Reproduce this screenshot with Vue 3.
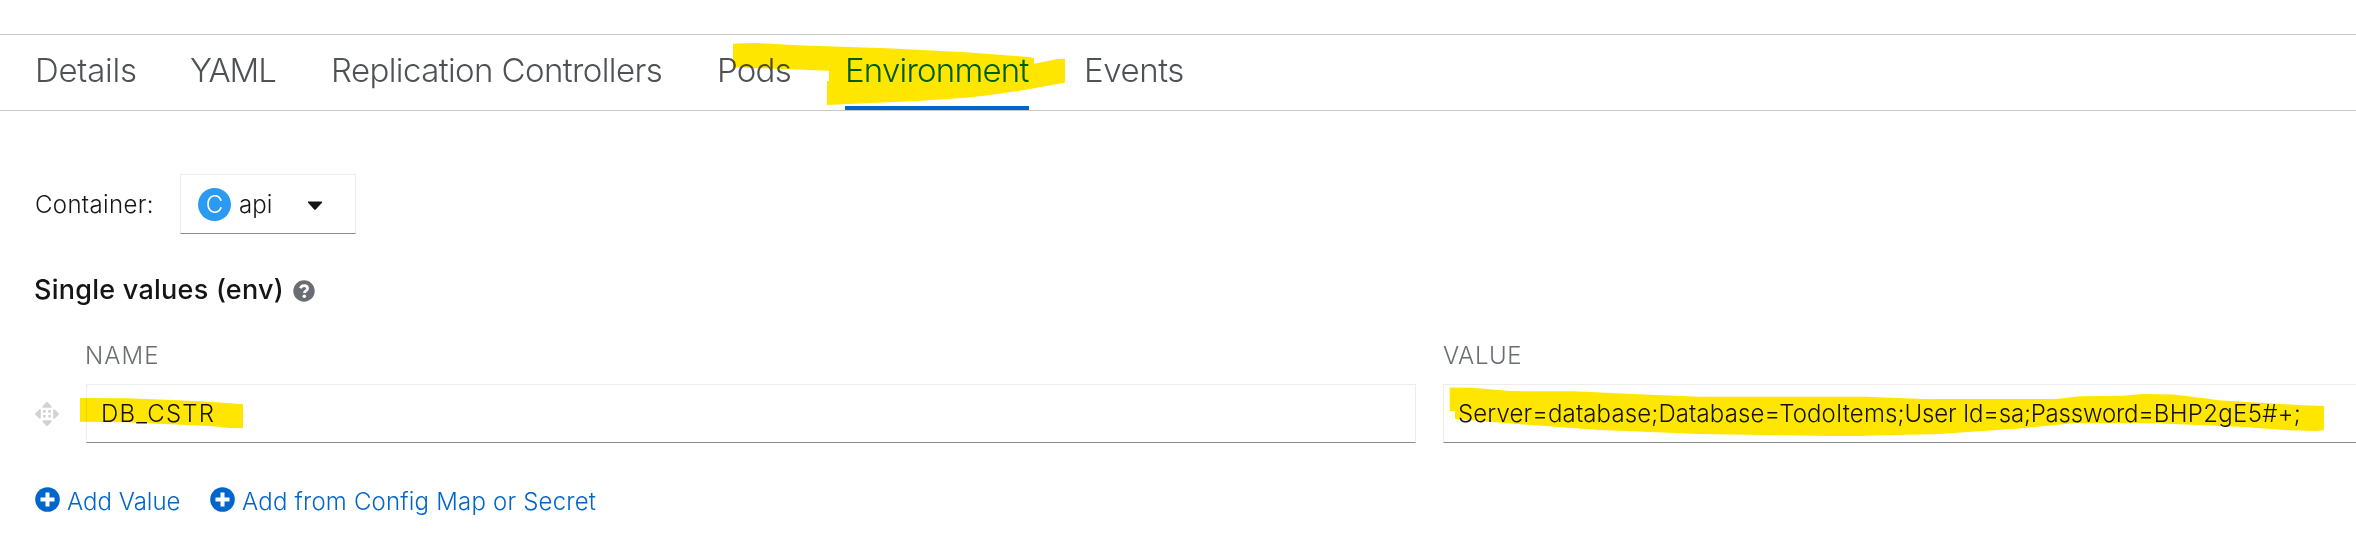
<script setup>
const tabs = [
  { label: 'Details', width: 100, tracking: -0.25 },
  { label: 'YAML', width: 86, tracking: -1.1 },
  { label: 'Replication Controllers', width: 331, tracking: -0.59 },
  { label: 'Pods', width: 73, tracking: -0.75 },
  { label: 'Environment', width: 184, tracking: -0.78, active: true },
  { label: 'Events', width: 100, tracking: -0.42 },
]
const actions = [
  { label: 'Add Value', cls: 'add-value' },
  { label: 'Add from Config Map or Secret', cls: 'add-from' },
]
</script>

<template>
  <main class="page">
    <nav class="tabs">
      <a
        v-for="t in tabs"
        :key="t.label"
        class="tab"
        :class="{ active: t.active }"
        :style="{ width: t.width + 'px', letterSpacing: t.tracking + 'px' }"
      >{{ t.label }}</a>
    </nav>

    <section class="container-row">
      <span class="container-label">Container:</span>
      <div class="select">
        <span class="badge">C</span>
        <span class="select-text">api</span>
        <svg class="caret" width="16" height="10" viewBox="0 0 16 10"><path d="M1.4 .5h13.2q1 .3.3 1.3L8.8 8.4q-.8.8-1.6 0L1.1 1.8Q.4.8 1.4.5z" fill="#151515" /></svg>
      </div>
    </section>

    <h2 class="heading">
      <span>Single values (env)</span>
      <svg class="help" width="22" height="22" viewBox="0 0 22 22">
        <circle cx="11" cy="11" r="10.7" fill="#6a6e73" />
        <path d="M7.4 8.2C8.1 6.5 9.3 5.7 11.1 5.7c2 0 3.5 1.1 3.5 2.9 0 2.4-3.2 2.3-3.2 4.4" fill="none" stroke="#fff" stroke-width="2.7" />
        <circle cx="11.3" cy="16.3" r="1.8" fill="#fff" />
      </svg>
    </h2>

    <section class="grid">
      <span></span>
      <span class="col name-col">NAME</span>
      <span class="col value-col">VALUE</span>
      <svg class="grip" width="24" height="24" viewBox="0 0 24 24" fill="#d2d2d2">
        <path d="M12 0q.6 0 1 .6l3.500 3.700q.7 1.500-.7 1.500H8.200q-1.400 0-.7-1.500L11 .6q.4-.6 1-.6zM12 24q.6 0 1-.6l3.500-3.700q.7-1.500-.7-1.500H8.200q-1.400 0-.7 1.500l3.500 3.700q.4.6 1 .6zM0 12q0-.6.6-1l3.700-3.500q1.500-.7 1.500.7v7.600q0 1.400-1.500.7L.6 13q-.6-.4-.6-1zM24 12q0-.6-.6-1l-3.700-3.500q-1.500-.7-1.500.7v7.600q0 1.400 1.500.7l3.700-3.500q.6-.4.6-1z" />
        <path d="M8.100 8.100h2.600v2.600H8.100zM13.300 8.100h2.600v2.600h-2.600zM8.100 13h2.600v2.600H8.100zM13.300 13h2.600v2.600h-2.600z" />
      </svg>
      <div class="field"><span class="name-text">DB_CSTR</span></div>
      <div class="field value"><span class="value-text">Server=database;Database=TodoItems;</span><span class="value-user">User Id=sa;Password=</span><span class="value-end">BHP2gE5#+;</span></div>
    </section>

    <section class="actions">
      <a v-for="a in actions" :key="a.label" class="action">
        <svg class="plus" width="25" height="25" viewBox="0 0 25 25">
          <circle cx="12.500" cy="12.500" r="12.300" fill="#06c" />
          <path d="M12.500 5.500v14M5.500 12.500h14" stroke="#fff" stroke-width="4" />
        </svg>
        <span :class="a.cls">{{ a.label }}</span>
      </a>
    </section>

    <!-- Marker strokes over the active tab and the variable's fields -->
    <svg class="marker" width="2356" height="560" viewBox="0 0 2356 560" fill="#ffe600">
      <path d="M733 43.700Q744 43 756 43L797 45.300L887 48.300L966 52.300L1028 57Q1034 57.500 1034 58.500V63.700Q1047 61.500 1057 59L1065 58.700V82.700L1024 90Q995 95 966 97.700L921 100.700L827 105V81H829V70.700L733 67.300z" />
      <path d="M80 398L127 398.300L173 400L213 402L243 404.300V428H230L213 426.300L127 422.300L80 421.700z" />
      <path d="M1449.700 387.500L1472 387.700L1498 390Q1513 391.300 1530 391.300H1573L1633 394L1700 396.700H1867L1923 399H2056L2073 397L2083 396.300L2123 395.700L2143 394L2173 394.500Q2188 396 2219 400.300L2303 405.300L2324 406V430L2316 431L2289 430.300L2243 427L2156 423.300H2073L2016 428.700L1939 434L1856 436H1833L1700 434L1600 430L1517 424L1455 419V411H1449.700z" />
    </svg>
  </main>
</template>

<style>
body { margin: 0; background: #fff; }
</style>

<style scoped>
.page {
  position: relative;
  width: 2356px;
  height: 560px;
  box-sizing: border-box;
  padding-top: 34px;
  overflow: hidden;
  background: #fff;
  color: #151515;
  font-family: Inter, "Liberation Sans", sans-serif;
  font-size: 24px;
  font-weight: 300;
}
.tabs {
  display: flex;
  gap: 55px;
  height: 75px;
  padding-left: 35px;
  border-top: 1px solid #c7c7c7;
  border-bottom: 1px solid #c7c7c7;
}
.tab {
  box-sizing: border-box;
  height: 75px;
  line-height: 70px;
  font-size: 33px;
  color: #4f5255;
  white-space: nowrap;
}
.tab.active {
  color: #06c;
  border-bottom: 4px solid #06c;
}
.container-row {
  display: flex;
  align-items: center;
  height: 60px;
  margin-top: 63px;
  padding-left: 35px;
}
.container-label { width: 145px; letter-spacing: .35px; }
.select {
  display: flex;
  align-items: center;
  box-sizing: border-box;
  width: 176px;
  height: 60px;
  padding-left: 17px;
  border: 1px solid #ededed;
  border-bottom-color: #8a8d90;
}
.badge {
  width: 33px;
  height: 33px;
  border-radius: 50%;
  background: #2b9af3;
  color: #fff;
  line-height: 33px;
  text-align: center;
}
.select-text { width: 68px; margin-left: 8px; }
.caret { display: block; margin-top: 3px; }
.heading {
  display: flex;
  align-items: center;
  gap: 9px;
  height: 40px;
  margin: 35px 0 0;
  padding-left: 34px;
  font-size: 27px;
  font-weight: 500;
}
.heading span { width: 250px; letter-spacing: .25px; white-space: nowrap; }
.help { margin-top: 3px; }
.grid {
  display: grid;
  grid-template-columns: 24px 1330px 920px;
  column-gap: 27px;
  grid-template-rows: 40px 59px;
  row-gap: 8px;
  align-items: center;
  margin-top: 27px;
  padding-left: 35px;
}
.col { color: #6a6e73; line-height: 40px; }
.name-col { letter-spacing: 1.100px; margin-left: -1px; }
.value-col { letter-spacing: .6px; }
.field {
  box-sizing: border-box;
  height: 59px;
  padding-left: 14px;
  border: 1px solid #ededed;
  border-bottom-color: #8a8d90;
  line-height: 57px;
  white-space: nowrap;
}
.name-text { letter-spacing: 1.200px; }
.value-text { letter-spacing: .12px; }
.value-user { letter-spacing: -.2px; }
.value-end { letter-spacing: .35px; }
.actions {
  display: flex;
  gap: 29px;
  margin-top: 38px;
  padding-left: 35px;
}
.action { display: flex; align-items: center; height: 40px; gap: 7px; color: #06c; }
.plus { margin-top: -3px; }
.add-value { width: 114px; white-space: nowrap; }
.add-from { letter-spacing: .2px; }
.marker {
  position: absolute;
  left: 0;
  top: 0;
  mix-blend-mode: multiply;
}
</style>
